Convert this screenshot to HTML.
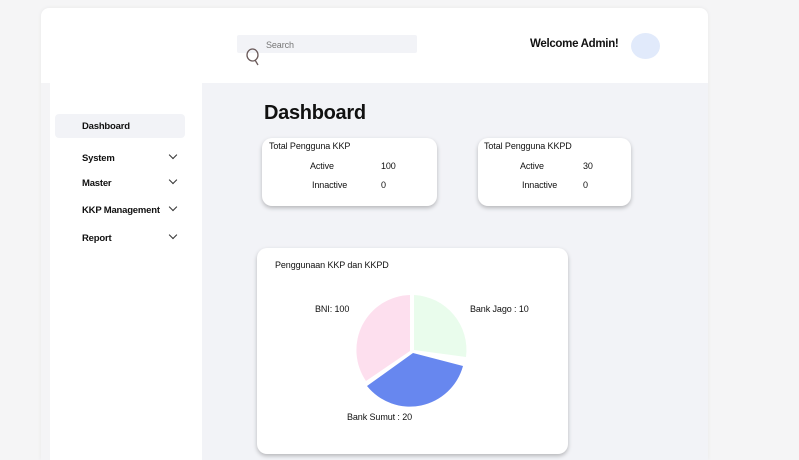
<!DOCTYPE html><html><head><style>
*{margin:0;padding:0;box-sizing:border-box}
html,body{width:799px;height:460px;overflow:hidden}
body{background:#f5f5f6;font-family:"Liberation Sans",sans-serif;color:#111;position:relative}
.a{position:absolute}
.card{background:#fff;border-radius:10px;box-shadow:0 2px 4px rgba(0,0,0,.25)}
.nav{position:absolute;left:82px;font-size:9.5px;font-weight:bold;letter-spacing:-0.2px}
.chev{position:absolute;left:170px;width:6px;height:6px;border-right:1.2px solid #333;border-bottom:1.2px solid #333;transform:rotate(45deg)}
.t{position:absolute;font-size:9px;letter-spacing:-0.1px}
</style></head><body>
<div class="a" style="left:41px;top:8px;width:667px;height:452px;background:#fff;border-radius:8px 8px 0 0;box-shadow:0 0 4px rgba(0,0,0,.06)"></div>
<div class="a" style="left:41px;top:83px;width:9px;height:377px;background:#f4f4f6"></div>
<div class="a" style="left:202px;top:83px;width:506px;height:377px;background:#f2f3f7"></div>
<div class="a" style="left:237px;top:35px;width:180px;height:18px;background:#f2f3f7;border-radius:2px"></div>
<div class="t" style="left:266px;top:40px;color:#777">Search</div>
<svg class="a" style="left:245px;top:47px" width="16" height="20"><ellipse cx="7.5" cy="8" rx="5.5" ry="6" fill="none" stroke="#6a5a5a" stroke-width="1.3"/><path d="M10 13 L13 18" stroke="#6a5a5a" stroke-width="1.3"/></svg>
<div class="t" style="left:530px;top:38px;font-size:11.5px;font-weight:bold;letter-spacing:-0.3px">Welcome Admin!</div>
<div class="a" style="left:631px;top:33px;width:29px;height:26px;border-radius:50%;background:#e1eafb"></div>
<div class="a" style="left:55px;top:114px;width:130px;height:24px;background:#f2f3f7;border-radius:4px"></div>
<div class="nav" style="top:121px">Dashboard</div>
<div class="nav" style="top:153px">System</div><div class="chev" style="top:152px"></div>
<div class="nav" style="top:178px">Master</div><div class="chev" style="top:177px"></div>
<div class="nav" style="top:205px">KKP Management</div><div class="chev" style="top:204px"></div>
<div class="nav" style="top:233px">Report</div><div class="chev" style="top:232px"></div>
<div class="t" style="left:264px;top:102px;font-size:20px;font-weight:bold;letter-spacing:-0.3px">Dashboard</div>
<div class="card a" style="left:262px;top:138px;width:175px;height:68px"></div>
<div class="t" style="left:269px;top:141px">Total Pengguna KKP</div>
<div class="t" style="left:310px;top:161px">Active</div><div class="t" style="left:381px;top:161px">100</div>
<div class="t" style="left:312px;top:180px">Innactive</div><div class="t" style="left:381px;top:180px">0</div>
<div class="card a" style="left:478px;top:138px;width:153px;height:68px"></div>
<div class="t" style="left:484px;top:141px">Total Pengguna KKPD</div>
<div class="t" style="left:520px;top:161px">Active</div><div class="t" style="left:583px;top:161px">30</div>
<div class="t" style="left:522px;top:180px">Innactive</div><div class="t" style="left:583px;top:180px">0</div>
<div class="card a" style="left:257px;top:248px;width:311px;height:206px"></div>
<div class="t" style="left:275px;top:260px">Penggunaan KKP dan KKPD</div>
<svg class="a" style="left:330px;top:280px" width="170" height="140">
<path d="M84 15 A55 55 0 0 1 136 77 L84 70 Z" fill="#e9fcec"/>
<path d="M80 15 L80 71 L36 101 A55 55 0 0 1 80 15 Z" fill="#fddfee"/>
<path d="M83 73 L133 86 A55 55 0 0 1 37 106 Z" fill="#6787ef"/>
</svg>
<div class="t" style="left:315px;top:304px">BNI: 100</div>
<div class="t" style="left:470px;top:304px">Bank Jago : 10</div>
<div class="t" style="left:347px;top:412px">Bank Sumut : 20</div>
</body></html>
